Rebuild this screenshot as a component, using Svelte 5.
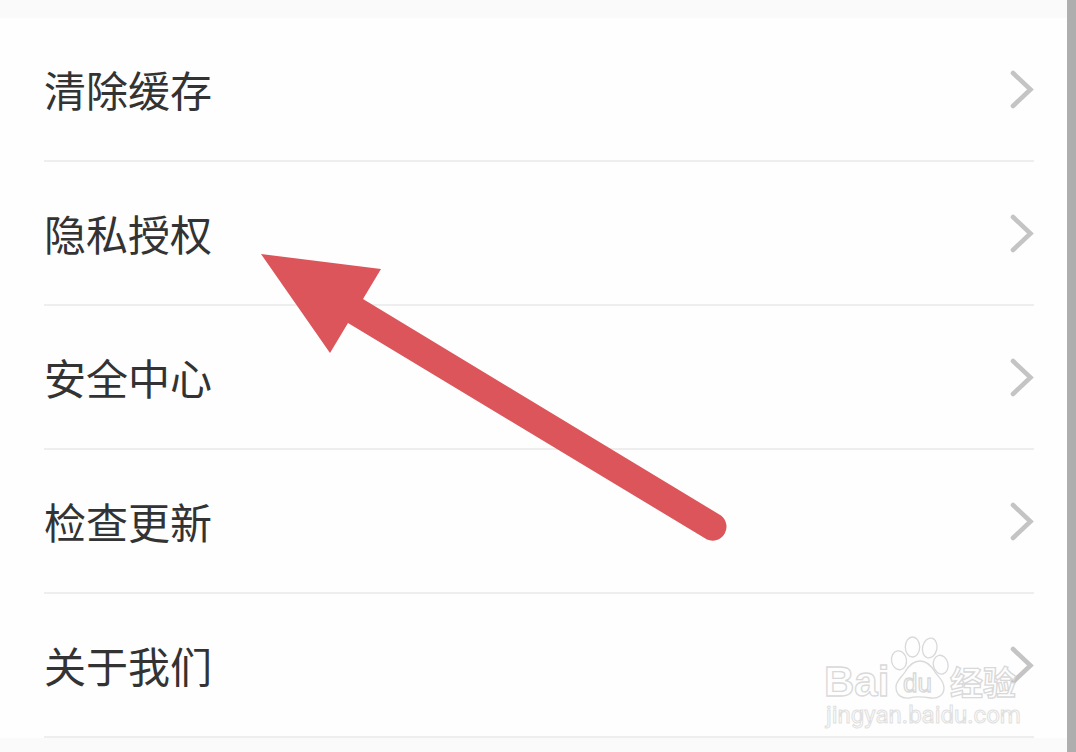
<script>
  const items = ['清除缓存', '隐私授权', '安全中心', '检查更新', '关于我们'];
</script>

<div class="page">
  <main class="panel">
    <ul class="list">
      {#each items as item}
        <li>
          <button type="button" class="row">
            <span class="label">{item}</span>
            <svg class="chevron" viewBox="0 0 24 40" aria-hidden="true">
              <path d="M3 4 20.5 20.5 3 37" />
            </svg>
          </button>
        </li>
      {/each}
    </ul>
  </main>

  <svg class="arrow" viewBox="0 0 468 290" aria-hidden="true">
    <path d="M0 0 120 15 102 45 460 261.500A14 14 0 0 1 446 285.500L87 69 69 99Z" />
  </svg>

  <svg class="watermark" viewBox="0 0 210 120" aria-hidden="true">
    <text class="brand" x="8" y="71" font-size="42">Bai</text>
    <g class="paw">
      <ellipse cx="83" cy="35.3" rx="7.5" ry="9.5" transform="rotate(-10 83 35.3)" />
      <ellipse cx="96.5" cy="22" rx="7.2" ry="10" />
      <ellipse cx="113.7" cy="23" rx="7.2" ry="10" transform="rotate(12 113.7 23)" />
      <ellipse cx="124.7" cy="39.7" rx="7.3" ry="9.5" transform="rotate(-12 124.7 39.7)" />
      <path d="M104 36C111 36 115 40 119 47C122 52 128 55 128 63C128 70 122 74 115 73C108 72 100 71 93 73C86 74 80 70 80 62C80 56 85 53 89 47C93 40 97 36 104 36Z" />
    </g>
    <text class="du" x="87" y="67" font-size="26">du</text>
    <text class="cjk" x="134" y="70" font-size="33">经验</text>
    <text class="site" x="10" y="98" font-size="24">jingyan.baidu.com</text>
  </svg>
</div>

<style>
  :global(body) {
    margin: 0;
    background: #fafafa;
  }

  .page {
    position: relative;
    box-sizing: border-box;
    min-height: 100vh;
    padding-top: 18px;
    overflow: hidden;
    border-right: 9px solid #aeaeae;
    background: #fafafa;
    font-family: "Noto Sans CJK SC", sans-serif;
  }

  .panel {
    padding: 0 33px 0 44px;
    background: #fefefe;
  }

  .list {
    margin: 0;
    padding: 0;
    list-style: none;
  }

  .row {
    display: flex;
    align-items: center;
    justify-content: space-between;
    box-sizing: border-box;
    width: 100%;
    height: 144px;
    padding: 0;
    border: 0;
    border-bottom: 2px solid #eee;
    background: none;
    color: #333;
    font: inherit;
    text-align: left;
    cursor: pointer;
  }

  .label {
    font-size: 42px;
    line-height: 60px;
  }

  .chevron {
    width: 24px;
    height: 40px;
    fill: none;
    stroke: #c4c4c4;
    stroke-width: 4.6;
    stroke-linecap: round;
    stroke-linejoin: miter;
  }

  .arrow {
    position: absolute;
    top: 254px;
    left: 261px;
    width: 468px;
    height: 290px;
    fill: #dc555b;
    pointer-events: none;
  }

  .watermark {
    position: absolute;
    right: 41px;
    bottom: 7px;
    width: 210px;
    height: 120px;
    fill: #fefefe;
    stroke: #d9d9d9;
    stroke-width: 1.3;
    pointer-events: none;
  }

  .brand {
    font-family: "Liberation Sans", Arial, sans-serif;
    font-weight: 700;
  }

  .du {
    font-family: "Liberation Sans", Arial, sans-serif;
    font-weight: 400;
  }

  .cjk {
    font-family: "Noto Sans CJK SC", sans-serif;
    font-weight: 700;
  }

  .site {
    font-family: Roboto, sans-serif;
    stroke: #e0e0e0;
    stroke-width: 1;
  }
</style>
